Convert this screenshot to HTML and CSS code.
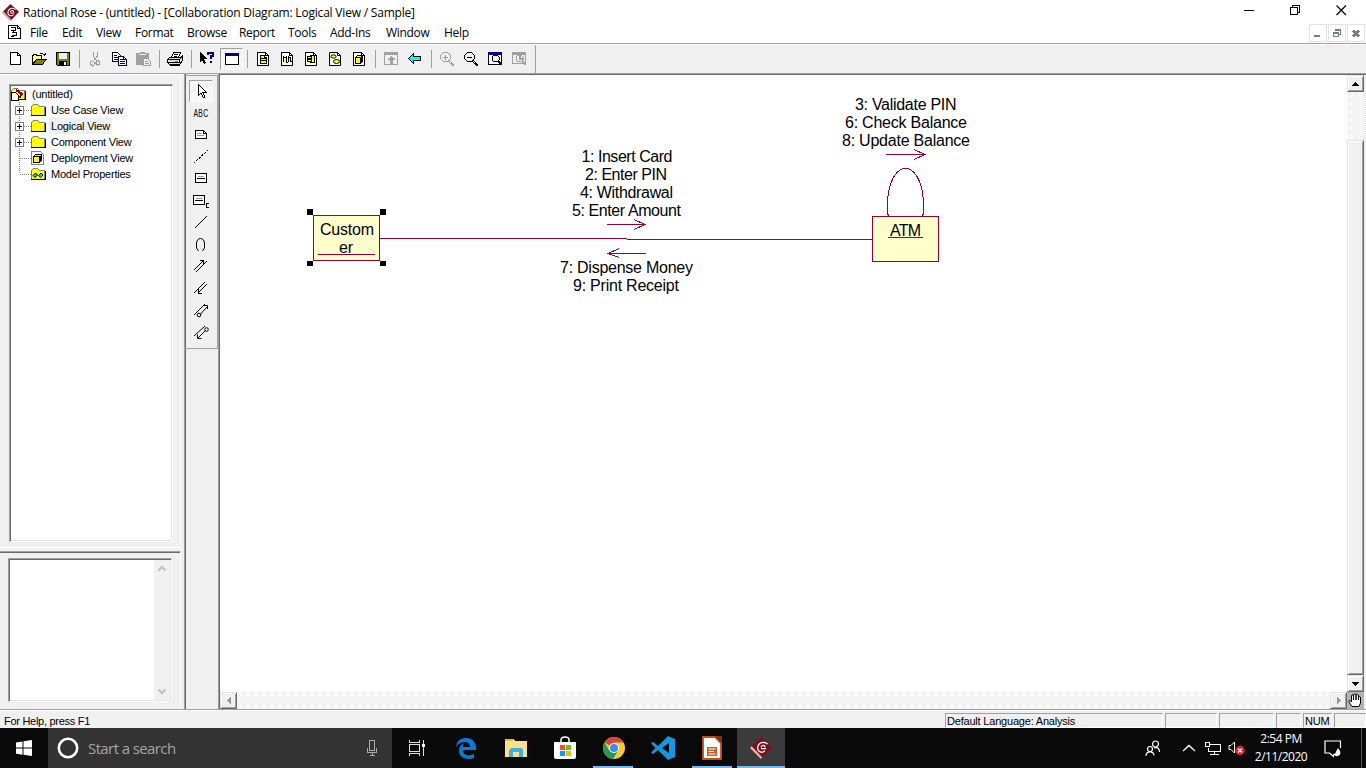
FILE: index.html
```html
<!DOCTYPE html>
<html lang="en">
<head>
<meta charset="utf-8">
<title>Rational Rose</title>
<link rel="stylesheet" href="styles.css">
</head>
<body>
<svg class="defs" width="0" height="0">
  <defs>
    <symbol id="folder" viewBox="0 0 16 16"><path d="M1.500 13.500V4.500L3.500 2.500H7.500L9.500 4.500H14.500V13.500Z" fill="#ff0" stroke="#808080"/><path d="M2 5.500H14" stroke="#ffc"/><path d="M1 13.500H15.500V5" fill="none" stroke="#000"/></symbol>
    <symbol id="page" viewBox="0 0 16 16"><path d="M2.500 1.500H10.500L13.500 4.500V14.500H2.500Z" fill="#fff" stroke="#000"/><path d="M10.500 1.500V4.500H13.500" fill="none" stroke="#000"/></symbol>
    <symbol id="rose" viewBox="0 0 20 20"><path d="M10 0L20 9L10 20L0 10Z" fill="#7c1018"/><path d="M0 10L10 20L11 18.500L1.500 8.500Z" fill="#d9c0b0"/><path d="M16 6.500C13 3.500 7.500 5 7 9.500C6.500 13.500 11 15 13.500 12.500M13.500 9.500C14 7 10.500 7 10 9.500M10 10.500H14.500" fill="none" stroke="#fff" stroke-width="1.200"/></symbol>
    <symbol id="lens" viewBox="0 0 16 16"><path d="M4.500 1.500H8.500L11.500 4.500V7.500L8.500 10.500H4.500L1.500 7.500V4.500Z" fill="none" stroke="currentColor"/><path d="M10 9L15 14M9 10L14 15M11 10L15 15" stroke="currentColor"/></symbol>
  </defs>
</svg>
<header class="titlebar">
  <svg class="app-icon" width="17" height="17"><use href="#rose"/></svg>
  <span class="title">Rational Rose - (untitled) - [Collaboration Diagram: Logical View / Sample]</span>
  <div class="caption">
    <svg width="11" height="11"><path d="M0 5.500H10" stroke="#000"/></svg>
    <svg width="11" height="11" fill="none" stroke="#000"><path d="M.5 2.500H7.500V9.500H.5ZM2.500 2V.5H9.500V7.500H8"/></svg>
    <svg class="smooth" width="11" height="11"><path d="M.5 .5L10 10M10 .5L.5 10" stroke="#000" stroke-width="1.200"/></svg>
  </div>
</header>
<nav class="menubar">
  <svg class="doc-icon" width="16" height="14"><path d="M1.500 .5H10.500L13.500 3.500V13.500H1.500Z" fill="#fff" stroke="#000"/><path d="M4 2.500H8.500V5.500H4M6.500 6V7.500M5 7.500H9.500V10.500H5M3.500 11.500H7" fill="none" stroke="#000"/><path d="M5 4h3M6 9h3" stroke="#ff0"/><path d="M10.500 1V3.500H13" stroke="#000" fill="none"/></svg>
  <div class="menus"><span>File</span><span>Edit</span><span>View</span><span>Format</span><span>Browse</span><span>Report</span><span>Tools</span><span>Add-Ins</span><span>Window</span><span>Help</span></div>
  <div class="mdi-buttons">
    <i><svg width="16" height="16"><path d="M4 10H10V12H4Z" fill="#708090"/></svg></i>
    <i><svg width="16" height="16" fill="none" stroke="#708090"><path d="M4.500 7.500H9.500V11.500H4.500ZM4 8.500H10M6.500 6V4.500H11.500V9.500H10M6 5.500H12"/></svg></i>
    <i><svg width="16" height="16"><path d="M5 5.500L11 11.500M11 5.500L5 11.500" stroke="#708090" stroke-width="2.500"/></svg></i>
  </div>
</nav>
<div class="toolbar">
  <b><svg><path d="M3.500 1.500H10.500L13.500 4.500V13.500H3.500Z" fill="#fff" stroke="#000"/><path d="M10.500 1.500V4.500H13.500" fill="none" stroke="#000"/></svg></b>
  <b><svg><path d="M1.500 13.500V4.500H2.500V3.500H5.500V4.500H10.500V7.500" fill="#ff8" stroke="#000"/><path d="M1.500 13.500L5.500 8.500H15L11.500 13.500Z" fill="#808000" stroke="#000"/><path d="M9 2.500H12M12 3.500H14.500V1.500M12.500 4.500H14" stroke="#000" fill="none"/></svg></b>
  <b><svg><path d="M1.500 1.500H14.500V14.500H2.500L1.500 13.500Z" fill="#808000" stroke="#000"/><path d="M4 2H12V8H4Z" fill="#f0f0f0"/><path d="M4 10H12V14H4Z" fill="#000"/><path d="M9 11h2v3H9Z" fill="#fff"/></svg></b>
  <s></s>
  <b><svg fill="none" stroke="#a0a0a0"><path d="M6.500 1V5L9.500 10M10.500 1V5L7.500 9M5.500 9.500L7.500 11.500V13.500L5.500 15L3.500 13V11ZM10.500 9.500L12.500 10.500V13.500L10.500 14L8.500 12Z"/></svg></b>
  <b><svg><path d="M1.500 1.500H6.500L9.500 4.500V10.500H1.500Z" fill="#fff" stroke="#000"/><path d="M3 4.500H6M3 6.500H7M3 8.500H7" stroke="#000"/><path d="M7.500 5.500H12.500L15.500 8.500V14.500H7.500Z" fill="#fff" stroke="#000080"/><path d="M9 8.500H12M9 10.500H14M9 12.500H14M12.500 6V8.500H15" fill="none" stroke="#000080"/></svg></b>
  <b><svg><path d="M1 2H5V1H10V2H14V14H1Z" fill="#a0a0a0"/><path d="M4 3.500H11" stroke="#f0f0f0"/><path d="M8.500 7.500H12.500L15.500 10.500V14.500H8.500Z" fill="#f0f0f0" stroke="#a0a0a0"/><path d="M10 10.500H13M10 12.500H14" stroke="#a0a0a0"/></svg></b>
  <s></s>
  <b><svg><path d="M4.500 6.500L6.500 1.500H13.500L11.500 6.500" fill="#fff" stroke="#000"/><path d="M7 3.500H11M6.500 5.500H10" stroke="#000"/><path d="M2.500 6.500H13.500L15.500 5V9.500L12.500 13.500H2.500L.5 11.500V8.500Z" fill="#ddd" stroke="#000"/><path d="M1 8.500H12.500L15 6M1 11.500H12.500V9M3 14.500H12L15 10" fill="none" stroke="#000"/><path d="M8 10H11V11H8Z" fill="#0d0"/></svg></b>
  <s></s>
  <b><svg><path d="M1 1L8 8H5L7 12L5 13L3 9L1 11Z" fill="#000"/><path d="M9 4V2H14V5H12V8M11 11H13" fill="none" stroke="#000080" stroke-width="2"/></svg></b>
  <b class="pressed"><svg><path d="M1.500 2.500H14.500V13.500H1.500Z" fill="#fff" stroke="#000"/><path d="M1 2H15V5H1Z" fill="#000080"/></svg></b>
  <s></s>
  <b><svg><use href="#page"/><path d="M5.500 4.500H9.500V6.500H11.500V12.500H5.500Z" fill="#ff0" stroke="#000"/><path d="M5 7.500H12M5 9.500H12" stroke="#000"/></svg></b>
  <b><svg><use href="#page"/><path d="M4 6H5V8H6V6H7V11H4ZM9 7H11V11H9Z" fill="#ff0"/><path d="M4.500 5V11M5 6.500H7M7.500 5V12M8 11.500H9M9.500 5V11M10 6.500H11M11.500 6V11M12 10.500H13" stroke="#000"/></svg></b>
  <b><svg><use href="#page"/><path d="M7.500 4.500H11.500V11.500H7.500Z" fill="#ff0" stroke="#000"/><path d="M4.500 5.500H8.500V7.500H4.500ZM4.500 8.500H8.500V10.500H4.500Z" fill="#ff0" stroke="#000"/></svg></b>
  <b><svg class="smooth"><use href="#page"/><ellipse cx="6.500" cy="5.500" rx="2.600" ry="1.700" fill="#ff0" stroke="#000"/><ellipse cx="9.500" cy="10.500" rx="3" ry="2" fill="#ff0" stroke="#000"/></svg></b>
  <b><svg><use href="#page"/><path d="M4.500 6.500L6.500 4.500H11.500V10.500L9.500 12.500H4.500ZM4.500 6.500H9.500V12.500M9.500 6.500L11.500 4.500" fill="#ff0" stroke="#000"/><path d="M10 6H12V10L10 12Z" fill="#000"/></svg></b>
  <s></s>
  <b><svg><path d="M1.500 1.500H14.500V13.500H1.500Z" fill="none" stroke="#a0a0a0"/><path d="M1 2H15V4H1ZM8 5L12 9H9.500V13H6.500V9H4Z" fill="#a0a0a0"/></svg></b>
  <b><svg><path d="M1.500 7.500L6.500 2.500V5.500H13.500V9.500H6.500V12.500Z" fill="#0ff" stroke="#000"/></svg></b>
  <s></s>
  <b class="disabled"><svg><use href="#lens"/><path d="M4 6.500H9M6.500 4V9" stroke="currentColor"/></svg></b>
  <b><svg><use href="#lens"/><path d="M4 6.500H9" stroke="#000"/></svg></b>
  <b><svg><path d="M1.500 2.500H14.500V13.500H1.500Z" fill="#fff" stroke="#000"/><path d="M1 1H15V4H1Z" fill="#000080"/><path d="M6.500 4.500H10.500L12 6V9L10.500 10.500H6.500L5 9V6Z" fill="#f0f0f0" stroke="#000"/><path d="M11 10L15 14" stroke="#000" stroke-width="2"/></svg></b>
  <b><svg><path d="M1.500 2.500H14.500V12.500H1.500Z" fill="none" stroke="#a0a0a0"/><path d="M1 1H15V4H1Z" fill="#a0a0a0"/><path d="M6.500 4.500H10.500L12 6V9L10.500 10.500H6.500L5 9V6Z" fill="none" stroke="#a0a0a0"/><path d="M9 4V8H12M11 10L15 14" stroke="#a0a0a0" stroke-width="2" fill="none"/></svg></b>
</div>
<main class="workspace">
  <aside class="browser">
    <section class="tree-pane">
      <div class="tree sunken">
        <div class="row root"><svg width="16" height="16"><use href="#folder"/><path d="M1.500 6.500H5.500L8.500 9.500V14.500H1.500Z" fill="#fff" stroke="#000"/><path d="M6 4L12 8L9 12" fill="none" stroke="#900020" stroke-width="2"/></svg><span>(untitled)</span></div>
        <div class="row"><svg width="20" height="16"><path class="dots" d="M9.500 0V16M14 8.500H21"/><path d="M5.500 4.500H13.500V12.500H5.500Z" fill="#fff" stroke="#808080"/><path d="M7 8.500H12M9.500 6V11" stroke="#000"/></svg><svg width="16" height="16"><use href="#folder"/></svg><span>Use Case View</span></div>
        <div class="row"><svg width="20" height="16"><path class="dots" d="M9.500 0V16M14 8.500H21"/><path d="M5.500 4.500H13.500V12.500H5.500Z" fill="#fff" stroke="#808080"/><path d="M7 8.500H12M9.500 6V11" stroke="#000"/></svg><svg width="16" height="16"><use href="#folder"/></svg><span class="selected">Logical View</span></div>
        <div class="row"><svg width="20" height="16"><path class="dots" d="M9.500 0V16M14 8.500H21"/><path d="M5.500 4.500H13.500V12.500H5.500Z" fill="#fff" stroke="#808080"/><path d="M7 8.500H12M9.500 6V11" stroke="#000"/></svg><svg width="16" height="16"><use href="#folder"/></svg><span>Component View</span></div>
        <div class="row"><svg width="20" height="16"><path class="dots" d="M9.500 0V16M10 8.500H21"/></svg><svg width="16" height="16"><path d="M1.500 1.500H10.500L13.500 4.500V14.500H1.500Z" fill="#fff" stroke="#808080"/><path d="M3.500 6.500L5.500 4.500H11.500V10.500L9.500 12.500H3.500ZM3.500 6.500H9.500V12.500" fill="#ff0" stroke="#000"/><path d="M10 6H12V10L10 12Z" fill="#000"/></svg><span>Deployment View</span></div>
        <div class="row"><svg width="20" height="16"><path class="dots" d="M9.500 0V8M10 8.500H21"/></svg><svg width="16" height="16"><use href="#folder"/><path class="smooth" d="M3 9.500L5.500 7L7.500 9L5 11.500ZM8.500 9.500L11 7L13 9L10.500 11.500Z" fill="#0cc" stroke="#000"/></svg><span>Model Properties</span></div>
      </div>
    </section>
    <section class="doc-pane">
      <div class="doc sunken">
        <div class="doc-scroll">
          <svg class="smooth" width="10" height="7"><path d="M1.500 5.500L5 2L8.500 5.500" fill="none" stroke="#bfbfbf" stroke-width="2"/></svg>
          <svg class="smooth" width="10" height="7"><path d="M1.500 1.500L5 5L8.500 1.500" fill="none" stroke="#bfbfbf" stroke-width="2"/></svg>
        </div>
      </div>
    </section>
  </aside>
  <div class="palette-dock">
    <div class="palette">
      <b class="pressed"><svg><path d="M5.500 1.500V12.500L8 10L10.500 14.500L12 14L10 9.500H13.500Z" fill="#fff" stroke="#000"/></svg></b>
      <b><span>ABC</span></b>
      <b><svg><path d="M2.500 3.500H10.500L13.500 6.500V11.500H2.500Z" fill="#fff" stroke="#000"/><path d="M10.500 3.500V6.500H14" fill="none" stroke="#000"/><path d="M4 6.500H9M4 8.500H11" stroke="#999"/></svg></b>
      <b><svg><path d="M1 14L15 1" stroke="#000" stroke-dasharray="2 1.500"/></svg></b>
      <b><svg><path d="M2.500 2.500H13.500V11.500H2.500Z" fill="#fff" stroke="#000"/><path d="M5 5.500H11" stroke="#999"/><path d="M4 7.500H12" stroke="#000"/></svg></b>
      <b><svg><path d="M.5 2.500H11.500V11.500H.5Z" fill="#fff" stroke="#000"/><path d="M3 5.500H9" stroke="#999"/><path d="M2 7.500H10M16 10.500H13.500V14.500H16" fill="none" stroke="#000"/></svg></b>
      <b><svg><path d="M2 13L14 1" stroke="#000"/></svg></b>
      <b><svg class="smooth"><path d="M5.500 14L3.500 11V6C4 0 11 0 11.500 6V11L9.500 14" fill="none" stroke="#000"/></svg></b>
      <b><svg fill="none" stroke="#000"><path d="M1 11L11 1M3 13L14 2M7 1.500H10.500V5"/></svg></b>
      <b><svg fill="none" stroke="#000"><path d="M1 12L12 1M5 12L14 3M5.500 8V12H9"/></svg></b>
      <b><svg class="smooth" fill="none" stroke="#000"><path d="M1 12L12 1M7.500 11L15 3M11 2.500H14.500V6"/><circle cx="6" cy="12" r="1.800"/></svg></b>
      <b><svg class="smooth" fill="none" stroke="#000"><path d="M1 11L12 1M5 13L12 6M4.500 9.500V13.500H8.500"/><circle cx="13.500" cy="4.500" r="1.800"/></svg></b>
    </div>
  </div>
  <section class="diagram-window">
    <svg class="diagram" width="1127" height="617" viewBox="220 75 1127 617">
      <g class="lines">
        <path d="M380 238.500H627M627 239.500H872"/>
        <path d="M607 224.500H646M634 219.500L645 224.500L634 229.500"/>
        <path d="M646 253.500H607M619 248.500L608 253.500L619 257.500"/>
        <path d="M886 154.500H926M914 149.500L925 154.500L914 159.500"/>
        <path d="M888.500 216L887.500 213V202C888.500 180 897 168.500 905.500 168.500C914 168.500 922.500 180 923.500 202V213L922.500 216"/>
        <path class="node" d="M313.500 215.500H379.500V260.500H313.500ZM872.500 216.500H938.500V261.500H872.500Z"/>
        <path d="M318 254.500H375"/>
      </g>
      <path d="M307 209h6v6h-6ZM380 209h6v6h-6ZM307 261h6v5h-6ZM380 261h6v5h-6Z"/>
      <g class="labels">
        <text x="320" y="235" textLength="54">Custom</text><text x="339" y="253" textLength="14">er</text>
        <text x="890" y="236" textLength="31">ATM</text>
        <text x="581.500" y="162" textLength="91">1: Insert Card</text>
        <text x="585" y="180" textLength="82">2: Enter PIN</text>
        <text x="580" y="198" textLength="93">4: Withdrawal</text>
        <text x="572" y="216" textLength="109">5: Enter Amount</text>
        <text x="560" y="273" textLength="133">7: Dispense Money</text>
        <text x="573" y="291" textLength="106">9: Print Receipt</text>
        <text x="855" y="110" textLength="101.500">3: Validate PIN</text>
        <text x="845" y="128" textLength="122">6: Check Balance</text>
        <text x="842" y="146" textLength="128">8: Update Balance</text>
      </g>
      <path class="lines" d="M888 237.500H923"/>
    </svg>
    <div class="vscroll">
      <b class="raised"><svg width="7" height="4"><path d="M3 0H4V1H5V2H6V3H7V4H0V3H1V2H2V1H3Z"/></svg></b>
      <div class="gap"></div>
      <div class="thumb raised"></div>
      <b class="raised"><svg width="7" height="4"><path d="M0 0H7V1H6V2H5V3H4V4H3V3H2V2H1V1H0Z"/></svg></b>
    </div>
    <div class="hscroll">
      <b class="raised"><svg width="4" height="7"><path d="M4 0V7L0 4V3Z" fill="#999"/></svg></b>
      <b class="raised"><svg width="4" height="7"><path d="M0 0V7L4 4V3Z" fill="#999"/></svg></b>
    </div>
    <div class="hand"><svg class="smooth" width="15" height="15"><path d="M4 13.500L1 9C0 7.500 2 6.500 3.500 9V3C3.500 1.500 5.500 1.500 5.500 3V7V2C5.500 .5 8 .5 8 2V7V2C8 1 10.500 1 10.500 3V7V4C11 3 13 3.500 12.500 5V10L11 13.500Z" fill="#fff" stroke="#000"/></svg></div>
  </section>
</main>
<footer class="statusbar">
  <span class="help">For Help, press F1</span>
  <div class="cells"><span>Default Language: Analysis</span><span></span><span></span><span></span><span>NUM</span><span></span></div>
</footer>
<div class="taskbar">
  <div class="start"><svg class="smooth" width="16" height="16" fill="#fff"><path d="M0 2.500L6.500 1.500V7.500H0ZM7.500 1.300L16 0V7.500H7.500ZM0 8.500H6.500V14.700L0 13.700ZM7.500 8.500H16V16L7.500 14.800Z"/></svg></div>
  <div class="search">
    <svg class="smooth" width="22" height="22"><circle cx="11" cy="11" r="9.200" fill="none" stroke="#fff" stroke-width="2.500"/></svg>
    <span>Start a search</span>
    <svg class="mic" width="12" height="18" fill="none" stroke="#aaa"><path d="M3.500 1.500H8.500V11.500H3.500ZM1.500 9V13.500H10.500V9M6 14V16.500M3.500 16.500H9"/></svg>
  </div>
  <div class="apps">
    <div><svg width="18" height="18" fill="none" stroke="#ddd"><path d="M1.500 1V3.500H11.500V1M1.500 5.500H11.500V12.500H1.500ZM1.500 17V14.500H11.500V17M15.500 1V17"/><path d="M14 5h3v3h-3Z" fill="#fff" stroke="none"/></svg></div>
    <div><svg class="smooth" width="22" height="22"><path d="M1 10C2 3 6 1 11 1C18 1 21 6 21 11V13H8C8 19 15 19.500 19 17V21C14 23 4 22 4 14C4 9 7 7 10 6C8 7 8 9 8 10H15C15 3 5 4 1 10Z" fill="#0b79d8"/></svg></div>
    <div><svg width="22" height="20"><path d="M0 1H8L10 3H22V19H0Z" fill="#ffe18d"/><path d="M0 1H8V3H0Z" fill="#f0b923"/><path d="M4 19V12L6 10H16L18 12V19H14V14H8V19Z" fill="#36b3e8"/></svg></div>
    <div><svg class="smooth" width="24" height="24"><path d="M8 7V4C8 0 16 0 16 4V7" fill="none" stroke="#fff" stroke-width="1.500"/><path d="M1 6H23V21Q23 23 21 23H3Q1 23 1 21Z" fill="#fff"/><path d="M7 9h5v5H7Z" fill="#f25022"/><path d="M13 9h5v5h-5Z" fill="#7fba00"/><path d="M7 15h5v5H7Z" fill="#00a4ef"/><path d="M13 15h5v5h-5Z" fill="#ffb900"/></svg></div>
    <div class="running"><svg class="smooth" width="22" height="22"><circle cx="11" cy="11" r="11" fill="#fbc92f"/><path d="M11 11L1.500 5.500A11 11 0 0 1 20.500 5.500H11Z" fill="#d9473c"/><path d="M1.500 5.500A11 11 0 0 0 10 22L15.500 13L11 11L6 13Z" fill="#229a55"/><circle cx="11" cy="11" r="5" fill="#fff"/><circle cx="11" cy="11" r="4" fill="#4086f4"/></svg></div>
    <div><svg class="smooth" width="24" height="24"><path d="M17 0L24 3V21L17 24L7 14L2 18L0 16.500L4.500 12L0 7.500L2 6L7 10ZM18 7L11 12L18 17Z" fill="#1596df" fill-rule="evenodd"/></svg></div>
    <div class="running"><svg class="smooth" width="20" height="24"><path d="M1 1H13L19 7V23H1Z" fill="#fff" stroke="#c4510e" stroke-width="1.800"/><path d="M13 0L20 7V0Z" fill="#7d310c"/><path d="M5 11H15V20H5Z" fill="#c4602d"/><path d="M6.500 13H13.500M6.500 15.500H12M6.500 18H13.500" stroke="#fff"/></svg></div>
    <div class="running active"><svg class="smooth" width="22" height="22"><use href="#rose"/></svg></div>
  </div>
  <div class="tray">
    <svg class="smooth" width="16" height="17" fill="none" stroke="#fff" stroke-width="1.200"><circle cx="10.500" cy="4" r="3"/><circle cx="5" cy="9" r="2.500"/><path d="M1 16C1 10.500 9 10.500 9 15.500M9 8C13 6.500 14.500 9 14.500 12"/></svg>
    <svg class="smooth" width="14" height="8"><path d="M1 7L7 1.500L13 7" fill="none" stroke="#fff" stroke-width="1.300"/></svg>
    <svg width="18" height="15" fill="none" stroke="#fff"><path d="M6 3.500H16.500V10.500H4.500V7M10.500 11V13.500M6 13.500H15M1.500 1.500H5.500V5.500H1.500Z"/></svg>
    <svg class="smooth" width="18" height="16"><path d="M1 5.500H3L6.500 2V13L3 9.500H1Z" fill="none" stroke="#fff"/><circle cx="12" cy="10.500" r="4.700" fill="#d9252e"/><path d="M10 8.500L14 12.500M14 8.500L10 12.500" stroke="#fff" stroke-width="1.200"/></svg>
    <div class="clock"><span>2:54 PM</span><span>2/11/2020</span></div>
    <svg class="smooth" width="18" height="17"><path d="M16.500 8V1H1V13H5.500L9.500 16.500V14" fill="none" stroke="#fff" stroke-width="1.200"/><path d="M14 8C11 13 12 14 9 14C12 18 18 16 16 11Z" fill="#fff"/></svg>
    <div class="peek"></div>
  </div>
</div>
</body>
</html>
```
FILE: styles.css
```css
* { box-sizing: border-box; }
body { margin: 0; width: 1366px; height: 768px; overflow: hidden; display: flex; flex-direction: column; background: #f0f0f0; color: #000; font: 11px "Liberation Sans", Arial, sans-serif; white-space: nowrap; }
svg { display: block; flex: none; overflow: visible; shape-rendering: crispEdges; }
.smooth, .app-icon { shape-rendering: auto; }
.defs { position: absolute; }
b, i, s { font-weight: normal; font-style: normal; text-decoration: none; }

.titlebar { height: 24px; background: #fff; display: flex; align-items: center; padding-left: 2px; font: 12px "Open Sans", "Noto Sans", sans-serif; }
.app-icon { margin-right: 4px; }
.title { letter-spacing: -0.2px; }
.caption { margin-left: auto; display: flex; gap: 35px; padding-right: 19px; padding-bottom: 4px; }

.menubar { height: 21px; background: #fff; display: flex; align-items: center; padding: 0 0 4px 7px; border-bottom: 1px solid #fff; box-shadow: inset 0 -1px #a0a0a0; font: 12px "Open Sans", "Noto Sans", sans-serif; letter-spacing: -0.3px; }
.menus { margin-left: 7px; display: grid; grid-template-columns: 32px 34px 39px 52px 52px 49px 42px 56px 58px 40px; }
.mdi-buttons { margin: 1px 0 0 auto; display: flex; gap: 1px; padding-right: 1px; }
.mdi-buttons i { width: 18px; height: 18px; border: 1px solid #e3e3e3; }

.toolbar { height: 28px; width: 536px; border-right: 1px solid #a0a0a0; display: flex; padding: 2px 0 0 3px; }
.toolbar b { width: 24px; height: 24px; display: grid; place-items: center; }
.toolbar b svg, .palette b svg { width: 16px; height: 16px; }
.toolbar s { width: 8px; height: 18px; margin-top: 3px; background: linear-gradient(#a0a0a0, #a0a0a0) 4px 0 / 1px 100% no-repeat; }
.pressed { background: repeating-conic-gradient(#fff 0 25%, #f0f0f0 0 50%) 0 0 / 2px 2px; border: 1px solid; border-color: #a0a0a0 #fff #fff #a0a0a0; }
.toolbar b.pressed { width: 23px; height: 22px; margin: 1px 0 0 1px; }
.disabled { color: #a0a0a0; }

.workspace { height: 637px; display: flex; border-top: 1px solid #a0a0a0; border-bottom: 1px solid #a0a0a0; }
.sunken { background: #fff; border: 1px solid; border-color: #a0a0a0 #fff #fff #a0a0a0; box-shadow: inset 1px 1px #696969, inset -1px -1px #e3e3e3; }
.browser { width: 184px; display: flex; flex-direction: column; border-top: 1px solid #fff; }
.tree-pane { width: 181px; height: 473px; border: solid #fff; border-width: 0 1px 1px 0; padding: 9px 0 0 9px; }
.tree { width: 164px; height: 458px; padding: 1px 0 0 0; }
.row { height: 16px; display: flex; align-items: center; letter-spacing: -0.22px; }
.row span { height: 16px; line-height: 16px; padding: 0 2px; margin-left: 3px; }
.row.root span { margin-left: 4px; }
.selected { background: #f0f0f0; }
.dots { stroke: #808080; stroke-dasharray: 1 1; fill: none; }
.doc-pane { width: 181px; flex: 1; margin-top: 3px; border-top: 1px solid #a0a0a0; border-right: 1px solid #fff; box-shadow: inset 0 1px #696969; padding: 6px 0 0 8px; }
.doc { width: 164px; height: 144px; padding: 1px; display: flex; justify-content: flex-end; }
.doc-scroll { width: 16px; background: #f0f0f0; display: flex; flex-direction: column; align-items: center; justify-content: space-between; padding: 5px 0; }

.palette-dock { width: 35px; border-left: 1px solid #a0a0a0; box-shadow: inset 1px 0 #696969; padding-top: 1px; }
.palette { height: 274px; border: solid #a0a0a0; border-width: 1px 1px 1px 0; padding: 4px 0 0 4px; margin-right: 1px; }
.palette b { width: 24px; height: 22px; display: grid; place-items: center; }
.palette b svg { margin: 0 0 0 -1px; }
.palette b span { font-size: 11px; line-height: 12px; letter-spacing: .4px; transform: scaleX(.63); }

.diagram-window { width: 1147px; border: solid #696969; border-width: 1px 0 0 1px; box-shadow: -1px 0 #a0a0a0; display: grid; grid-template: 617px 17px / 1127px 17px; }
.diagram { background: #fff; }
.lines { stroke: #990033; fill: none; }
.node { fill: #ffffcc; }
.labels { font: 16px "Liberation Sans", Arial, sans-serif; }
.raised { display: grid; place-items: center; background: #f0f0f0; border: 1px solid; border-color: #e3e3e3 #696969 #696969 #e3e3e3; box-shadow: inset 1px 1px #fff, inset -1px -1px #a0a0a0; }
.vscroll { display: flex; flex-direction: column; width: 17px; background: repeating-conic-gradient(#fff 0 25%, #f0f0f0 0 50%) 0 0 / 2px 2px; }
.vscroll b, .hscroll b { width: 17px; height: 17px; }
.gap { height: 48px; }
.thumb { flex: 1; }
.hscroll { display: flex; justify-content: space-between; background: repeating-conic-gradient(#fff 0 25%, #f0f0f0 0 50%) 0 0 / 2px 2px; }
.hand { width: 17px; height: 17px; background: #b4b4b4; display: grid; place-items: center; }

.statusbar { height: 18px; border-top: 1px solid #fff; display: flex; justify-content: space-between; padding-left: 4px; line-height: 15px; letter-spacing: -0.2px; }
.help { padding-top: 3px; letter-spacing: -0.28px; }
.cells { display: grid; grid-template-columns: 218px 52px 55px 25px 29px 32px; column-gap: 2px; padding-top: 2px; }
.cells span { height: 15px; border: 1px solid; border-color: #a0a0a0 #fff #fff #a0a0a0; padding-left: 1px; }

.taskbar { height: 40px; background: #090909; color: #fff; display: flex; font: 12px "Open Sans", "Noto Sans", sans-serif; }
.start { width: 48px; display: grid; place-items: center; }
.search { width: 344px; background: #333; display: flex; align-items: center; padding: 0 14px 0 9px; font-size: 15px; color: #a6a6a6; }
.search span { margin-left: 9px; letter-spacing: -0.6px; }
.mic { margin-left: auto; }
.apps { display: flex; gap: 1.300px; }
.apps div { width: 48px; display: grid; place-items: center; }
.apps div:nth-child(-n+6) { padding-left: 2px; }
.running { background: linear-gradient(#76b9ed, #76b9ed) center bottom / 40px 2px no-repeat; }
.active { background: linear-gradient(#76b9ed, #76b9ed) center bottom / 48px 2px no-repeat #3b3b3b; }
.tray { margin-left: auto; display: flex; align-items: center; }
.tray > svg:nth-of-type(1) { margin-right: 21px; }
.tray > svg:nth-of-type(2) { margin-right: 8px; }
.tray > svg:nth-of-type(3) { margin-right: 6px; }
.tray > svg:nth-of-type(4) { margin-right: 8px; }
.tray > svg:nth-of-type(5) { margin: 0 19px 0 16px; }
.clock { width: 54px; display: flex; flex-direction: column; align-items: center; line-height: 18px; letter-spacing: -0.5px; }
.peek { height: 40px; width: 5px; border-left: 1px solid #555; }
```
